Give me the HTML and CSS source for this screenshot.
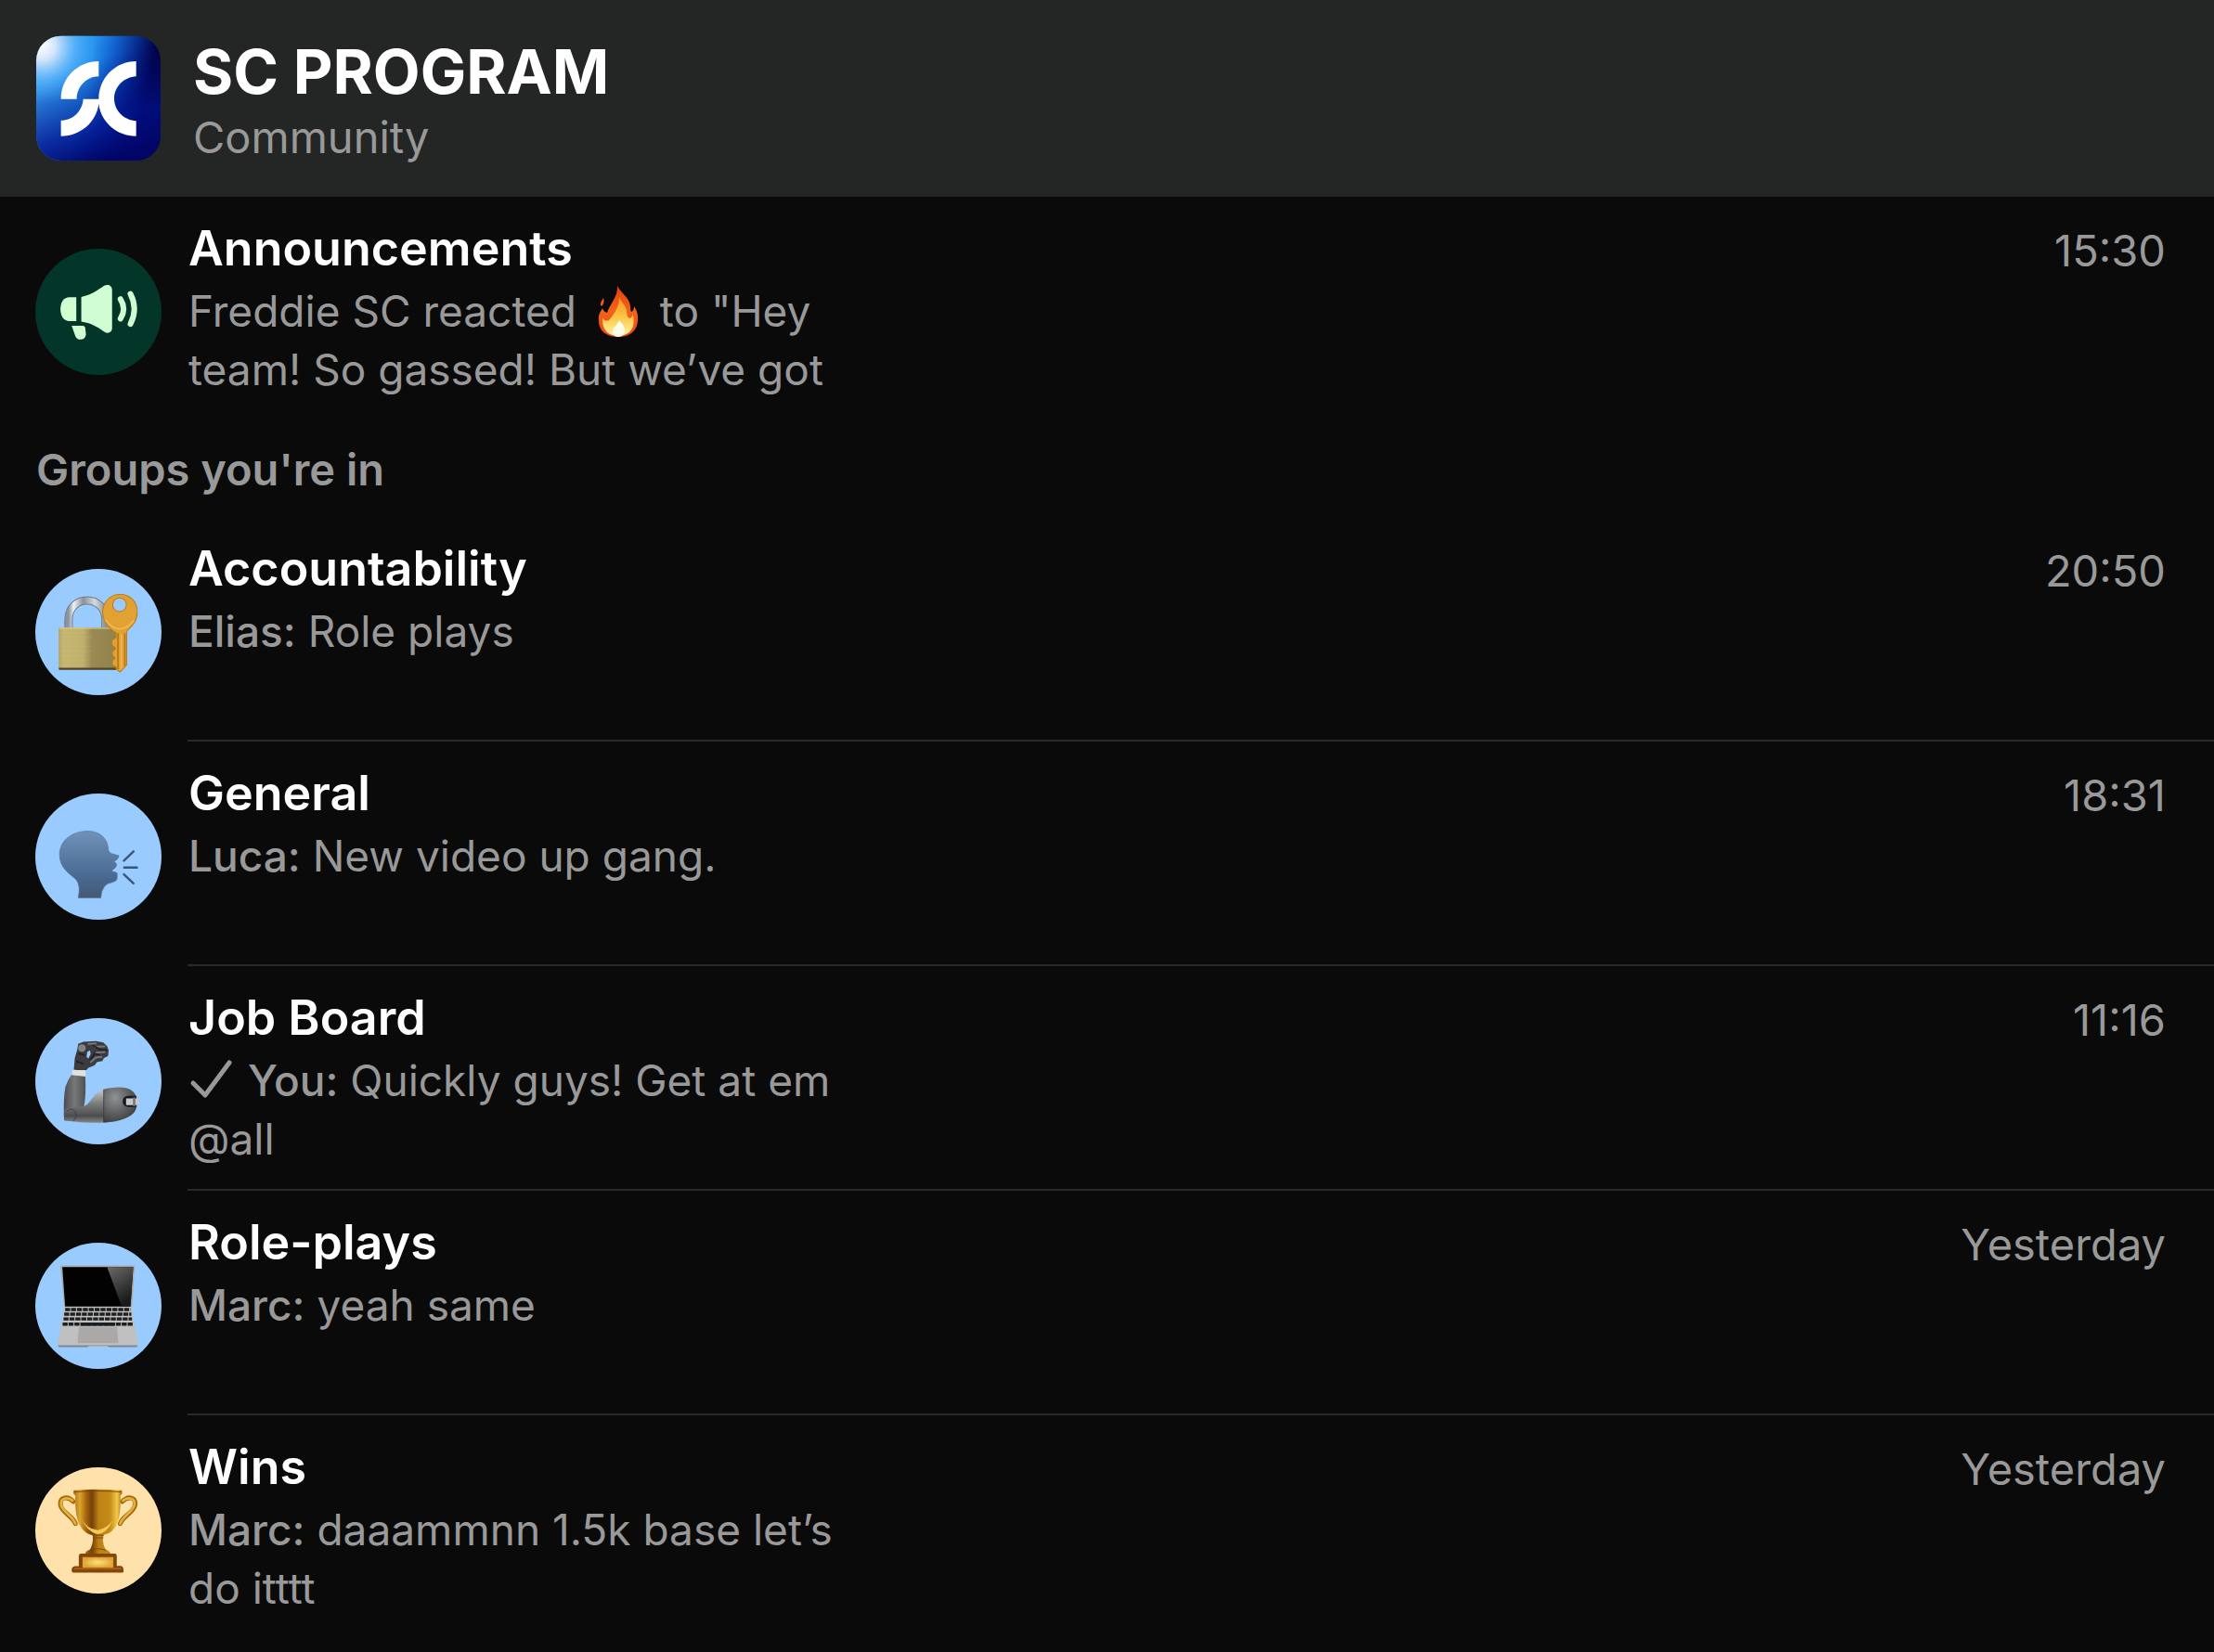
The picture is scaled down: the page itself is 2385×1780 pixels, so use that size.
FILE: index.html
```html
<!DOCTYPE html>
<html lang="en">
<head>
<meta charset="utf-8">
<meta name="viewport" content="width=device-width, initial-scale=1">
<title>SC PROGRAM</title>
<link rel="stylesheet" href="styles.css">
</head>
<body>
<header class="community">
  <svg class="avatar" viewBox="24 24 408 408" aria-hidden="true">
    <defs>
      <linearGradient id="logo-base" x1="0" y1="0.2" x2="1" y2="0.4">
        <stop offset="0" stop-color="#3ba4f5"/><stop offset="0.42" stop-color="#2593ee"/><stop offset="0.58" stop-color="#1263d0"/><stop offset="0.76" stop-color="#062a8c"/><stop offset="0.9" stop-color="#020348"/><stop offset="1" stop-color="#01022c"/>
      </linearGradient>
      <linearGradient id="logo-depth" x1="0.3" y1="0.25" x2="0.55" y2="1">
        <stop offset="0" stop-color="#010a80" stop-opacity="0"/><stop offset="0.65" stop-color="#01108c" stop-opacity="0.8"/><stop offset="1" stop-color="#010568"/>
      </linearGradient>
      <radialGradient id="logo-shine" cx="0.04" cy="0.08" r="0.46">
        <stop offset="0" stop-color="#fff"/><stop offset="0.25" stop-color="#d5e4fb"/><stop offset="0.6" stop-color="#62b8fb" stop-opacity="0.7"/><stop offset="1" stop-color="#3ba4f5" stop-opacity="0"/>
      </radialGradient>
    </defs>
    <g id="logo-tile">
      <rect x="27" y="26" width="402" height="403" rx="80" fill="url(#logo-base)"/>
      <rect x="27" y="26" width="402" height="403" rx="80" fill="url(#logo-depth)"/>
      <rect x="27" y="26" width="402" height="403" rx="80" fill="url(#logo-shine)"/>
    </g>
    <path fill="#fff" d="M229 108V157C190 157 158 190 158 230H107C107 162 161 108 229 108ZM350 108V157C312 159 279 189 279 229S312 299 350 301V350C288 350 236 305 229 245C222 304 170 350 107 350V299C146 299 176 269 179 230H229C229 162 283 108 350 108Z"/>
  </svg>
  <div class="community-text">
    <h1 class="community-name">SC PROGRAM</h1>
    <p class="community-kind">Community</p>
  </div>
</header>

<main>
  <a class="chat" href="#announcements">
    <svg class="avatar" viewBox="55 55 406 406" aria-hidden="true">
      <circle cx="258" cy="258" r="203" fill="#033629"/>
      <g fill="#d0fed2">
        <path d="M187 211V288H165C147 288 136 272 136 249S147 211 165 211Z"/>
        <path d="M203 210C232 206 254 189 277 174C288 167 302 173 302 187V311C302 324 288 330 277 322C254 305 232 293 203 289Z"/>
        <path d="M172 303H207C213 303 216 307 216 312L218 331C216 343 208 347 200 347C191 347 187 342 184 336Z"/>
      </g>
      <g fill="none" stroke="#d0fed2" stroke-width="18" stroke-linecap="round">
        <path d="M329 217Q349 248 329 280M361 200Q386 248 361 297"/>
      </g>
    </svg>
    <div class="chat-text">
      <h2 class="chat-name">Announcements</h2>
      <p class="chat-message">Freddie SC reacted <svg class="fire" viewBox="0 0 44 56" role="img" aria-label="fire"><defs><linearGradient id="flame" x1="0" y1="0" x2="0" y2="1"><stop offset="0" stop-color="#e8400f"/><stop offset="0.5" stop-color="#f36318"/><stop offset="1" stop-color="#ef431b"/></linearGradient><linearGradient id="flame-core" x1="0" y1="0" x2="0" y2="1"><stop offset="0" stop-color="#f79225"/><stop offset="0.45" stop-color="#f9c13d"/><stop offset="0.8" stop-color="#fde27a"/><stop offset="1" stop-color="#fff3b0"/></linearGradient></defs><path fill="url(#flame)" d="M21 0C24 7 34 12 35 22Q35 26 36 28Q39 27 39 22Q44 29 43 38C42 49 34 55 22 55S1 49 1 38C0 31 3 28 5 24Q6 28 10 29C12 21 22 12 21 0ZM6 13Q8 18 4 22Q1 20 6 13Z"/><path fill="url(#flame-core)" d="M23 12C25 18 31 21 31 28Q31 33 34 35Q37 34 38 31Q42 52 23 54Q4 54 5 34Q7 39 12 37C15 33 24 23 23 12Z"/><path fill="#fffbe6" d="M23 37C27 41 30 45 29 50Q27 55 22 55T16 50C15 45 21 43 23 37Z"/></svg> to "Hey team! So gassed! But we’ve got</p>
    </div>
    <time class="chat-time">15:30</time>
  </a>

  <section class="groups">
    <h2 class="groups-title">Groups you're in</h2>
    <ul class="group-list">
      <li>
        <a class="chat" href="#accountability">
          <svg class="avatar" viewBox="55 51 406 406" aria-hidden="true">
            <defs>
              <linearGradient id="brass" x1="0" x2="1"><stop offset="0" stop-color="#b5a463"/><stop offset="0.08" stop-color="#c5b672"/><stop offset="0.4" stop-color="#c0b06c"/><stop offset="0.55" stop-color="#988a52"/><stop offset="1" stop-color="#91814a"/></linearGradient>
              <linearGradient id="shackle" x1="0" x2="1"><stop offset="0" stop-color="#8b94a0"/><stop offset="0.14" stop-color="#eef1f5"/><stop offset="0.4" stop-color="#8b929a"/><stop offset="0.7" stop-color="#d4dae2"/><stop offset="1" stop-color="#8c939c"/></linearGradient>
            </defs>
            <circle cx="258" cy="254" r="203" fill="#99cbff"/>
            <path fill="none" stroke="#727c88" stroke-width="27" d="M162 243V215C162 132 281 132 281 215V243"/>
            <path fill="none" stroke="url(#shackle)" stroke-width="21" d="M162 243V215C162 132 281 132 281 215V243"/>
            <rect x="130" y="240" width="196" height="135" rx="4" fill="url(#brass)"/>
            <path stroke="#ddd08e" stroke-width="3" d="M132 242H312"/>
            <path stroke="#d5c98b" stroke-width="1" opacity="0.6" d="M132 256H220M132 271H240M132 286H215M132 301H230M132 316H240M132 331H210M132 346H230M132 360H220"/>
            <path fill="#51452b" d="M131 369H316V376H131Z"/>
            <path fill="#e2a233" stroke="#ba7e1c" stroke-width="3" fill-rule="evenodd" d="M328 133C363 133 383 160 383 189C383 218 369 233 354 246Q349 251 349 258V360L328 383L315 374V366L303 360V347L312 338L303 328V317L314 307L302 296V281L315 271V257C291 242 272 222 272 190C272 158 295 133 328 133ZM326 144A22 22 0 1 0 326 188A22 22 0 1 0 326 144Z"/>
            <path fill="none" stroke="#b67818" stroke-width="5" d="M321 258V374M343 258V363"/>
            <path fill="none" stroke="#f1bd58" stroke-width="4" d="M332 260V373M280 213Q300 243 328 244Q352 242 373 216"/>
          </svg>
          <div class="chat-text">
            <h3 class="chat-name">Accountability</h3>
            <p class="chat-message"><span class="sender">Elias:</span> Role plays</p>
          </div>
          <time class="chat-time">20:50</time>
        </a>
      </li>
      <li>
        <a class="chat" href="#general">
          <svg class="avatar" viewBox="55 43 406 406" aria-hidden="true">
            <defs><linearGradient id="head" x1="0" y1="0" x2="0" y2="1"><stop offset="0" stop-color="#7092b8"/><stop offset="0.65" stop-color="#4a6b94"/><stop offset="1" stop-color="#445974"/></linearGradient></defs>
            <circle cx="258" cy="246" r="203" fill="#99cbff"/>
            <path fill="url(#head)" stroke="#597899" stroke-width="2" d="M225 164C265 164 289 190 290 224Q291 233 300 236L324 243Q322 255 309 262L317 270L314 280L300 292L318 298Q320 310 317 321C306 332 288 328 277 343Q267 356 266 379H193Q202 339 186 320C169 302 133 285 133 239C134 192 175 164 225 164Z"/>
            <path stroke="#365779" stroke-width="7" stroke-linecap="round" d="M340 259L371 229M341 281H382M340 303L371 332"/>
          </svg>
          <div class="chat-text">
            <h3 class="chat-name">General</h3>
            <p class="chat-message"><span class="sender">Luca:</span> New video up gang.</p>
          </div>
          <time class="chat-time">18:31</time>
        </a>
      </li>
      <li>
        <a class="chat" href="#job-board">
          <svg class="avatar" viewBox="55 49 406 406" aria-hidden="true">
            <defs>
              <linearGradient id="forearm" x1="0" x2="1"><stop offset="0" stop-color="#4c4c4e"/><stop offset="0.5" stop-color="#77787a"/><stop offset="1" stop-color="#505153"/></linearGradient>
              <linearGradient id="upper-arm" x1="0" y1="0" x2="0" y2="1"><stop offset="0" stop-color="#c8cacc"/><stop offset="0.45" stop-color="#77787a"/><stop offset="0.8" stop-color="#4c4d4f"/><stop offset="1" stop-color="#85878a"/></linearGradient>
              <radialGradient id="shoulder" cx="0.35" cy="0.3" r="0.8"><stop offset="0" stop-color="#909193"/><stop offset="0.6" stop-color="#5a5b5d"/><stop offset="1" stop-color="#37383a"/></radialGradient>
            </defs>
            <circle cx="258" cy="252" r="203" fill="#99cbff"/>
            <path fill="#3b3c40" d="M179 215L182 178L190 150L193 132L210 125L250 123L274 127L286 139L291 153L289 171L275 178L271 187L254 190L245 201L226 209L216 219Z"/>
            <path fill="#99cbff" d="M222 158L231 153L233 165L226 179L220 174Z"/>
            <circle cx="205" cy="145" r="12" fill="#818387"/>
            <path fill="none" stroke="#75777b" stroke-width="6" stroke-linecap="round" d="M226 132L250 130M248 141L277 140M252 160L278 158M234 190L250 176L268 174"/>
            <path fill="none" stroke="#1f2023" stroke-width="5" d="M194 163L215 168M187 188L212 197M240 136L265 151L286 152M231 184L245 164L262 167"/>
            <path fill="#dfe1e3" d="M175 216H217V236H172Z"/>
            <path fill="url(#forearm)" d="M171 232L216 237Q219 300 211 336L184 378H148Q144 310 152 270Q160 247 171 232Z"/>
            <path fill="url(#upper-arm)" d="M150 344Q160 335 180 335L208 333C234 330 241 285 278 277V385Q220 387 181 382L151 379Q143 362 150 344Z"/>
            <path fill="url(#shoulder)" d="M275 278C306 270 344 267 364 281Q378 291 380 305V331C382 366 324 383 275 385Z"/>
            <path fill="none" stroke="#303134" stroke-width="2" d="M275 278V385M157 349Q173 333 183 350T176 380"/>
            <path fill="#18191b" d="M380 299H354Q336 300 336 317T354 335H381Z"/>
            <path fill="#c7c9ca" d="M347 307H378Q390 309 390 318T378 329H347Z"/>
            <path fill="#77797b" d="M369 304H377V332H369Z"/>
          </svg>
          <div class="chat-text">
            <h3 class="chat-name">Job Board</h3>
            <p class="chat-message"><svg class="tick" viewBox="0 0 48 44" role="img" aria-label="Sent"><path d="M5 26L18 39L44 4" fill="none" stroke="currentColor" stroke-width="5" stroke-linecap="round" stroke-linejoin="round"/></svg> <span class="sender">You:</span> Quickly guys! Get at em @all</p>
          </div>
          <time class="chat-time">11:16</time>
        </a>
      </li>
      <li>
        <a class="chat" href="#role-plays">
          <svg class="avatar" viewBox="55 57 406 406" aria-hidden="true">
            <defs><linearGradient id="glare" x1="0" y1="0" x2="0.4" y2="1"><stop offset="0" stop-color="#6a6a6a"/><stop offset="1" stop-color="#1a1a1a"/></linearGradient></defs>
            <circle cx="258" cy="260" r="203" fill="#99cbff"/>
            <path fill="#a9a8a5" d="M136 130H375L366 264H148Z"/>
            <path fill="#020202" d="M142 135H370L361 262H151Z"/>
            <path fill="url(#glare)" d="M286 135H370L361 262H333Z"/>
            <path fill="#bfc0bf" d="M148 263H364L385 382V391H127V382Z"/>
            <path stroke="#1d1e20" stroke-width="10" stroke-dasharray="16 3" d="M151 272H361M148 287H364M146 302H366M143 319H369"/>
            <path stroke="#1d1e20" stroke-width="10" d="M201 319H311"/>
            <path fill="#aaa9a8" d="M195 328H318L322 380H191Z"/>
            <path fill="#7c8896" d="M127 387H386L380 393H292L286 389H229L222 393H132Z"/>
          </svg>
          <div class="chat-text">
            <h3 class="chat-name">Role-plays</h3>
            <p class="chat-message"><span class="sender">Marc:</span> yeah same</p>
          </div>
          <time class="chat-time">Yesterday</time>
        </a>
      </li>
      <li>
        <a class="chat" href="#wins">
          <svg class="avatar" viewBox="55 48 406 406" aria-hidden="true">
            <defs>
              <linearGradient id="gold" x1="0" x2="1"><stop offset="0" stop-color="#a86d10"/><stop offset="0.13" stop-color="#dda62c"/><stop offset="0.25" stop-color="#a9690f"/><stop offset="0.38" stop-color="#74400a"/><stop offset="0.52" stop-color="#bd8114"/><stop offset="0.75" stop-color="#c58b18"/><stop offset="0.9" stop-color="#f4ca48"/><stop offset="1" stop-color="#a26a10"/></linearGradient>
              <radialGradient id="plate"><stop offset="0" stop-color="#ffe27a"/><stop offset="1" stop-color="#dfa534"/></radialGradient>
            </defs>
            <circle cx="258" cy="251" r="203" fill="#ffe2ab"/>
            <g fill="none" stroke-linecap="round">
              <path stroke="#a2680e" stroke-width="15" d="M177 158C158 138 133 145 136 169C139 193 174 203 184 229M335 158C354 138 379 145 376 169C373 193 338 203 328 229"/>
              <path stroke="#e5b23c" stroke-width="8" d="M175 155C157 141 135 148 138 169C142 190 174 203 184 229M337 155C355 141 377 148 374 169C370 190 338 203 328 229"/>
            </g>
            <path fill="url(#gold)" d="M178 122Q256 116 334 122V133L329 139C330 204 323 257 275 265L272 278Q273 300 282 313Q298 318 297 330H215Q214 318 230 313Q242 298 240 267C193 256 182 206 184 139L178 133Z"/>
            <path fill="none" stroke="#7e480b" stroke-width="3" d="M180 127Q256 121 332 127M239 267H275M240 275H274M230 315Q256 305 283 315"/>
            <path fill="#f4ca56" d="M203 211Q220 248 256 250Q285 246 303 220Q285 262 254 263Q220 255 203 211Z"/>
            <path fill="#85460a" d="M200 326H313Q317 328 317 333V365H332Q340 369 339 384Q338 387 333 387H178Q171 386 172 377Q173 368 182 366H195V333Q196 327 200 326Z"/>
            <path fill="url(#plate)" d="M207 337H306V371H207Z"/>
            <path stroke="#b36e1b" stroke-width="4" d="M180 374H332"/>
          </svg>
          <div class="chat-text">
            <h3 class="chat-name">Wins</h3>
            <p class="chat-message"><span class="sender">Marc:</span> daaammnn 1.5k base let’s do itttt</p>
          </div>
          <time class="chat-time">Yesterday</time>
        </a>
      </li>
    </ul>
  </section>
</main>
</body>
</html>
```
FILE: styles.css
```css
* {
  box-sizing: border-box;
}

body {
  margin: 0;
  min-height: 100vh;
  background: #0a0a0a;
  color: #999;
  font-family: Inter, "Liberation Sans", sans-serif;
  font-size: 47px;
  line-height: 63px;
}

h1, h2, h3, p, ul {
  margin: 0;
  padding: 0;
}

.community {
  display: flex;
  align-items: flex-start;
  gap: 34px;
  padding: 38px 38px 32px;
  background: #242625;
}

.avatar {
  display: block;
  flex: none;
  width: 136px;
  height: 136px;
}

.community-name {
  color: #fff;
  font-size: 66px;
  font-weight: 700;
  line-height: 78px;
}

.community-kind {
  line-height: 64px;
}

.chat {
  display: flex;
  align-items: stretch;
  gap: 29px;
  padding-left: 38px;
  color: inherit;
  text-decoration: none;
}

.chat .avatar {
  margin-top: 56px;
}

.chat-text {
  flex: 1;
  min-width: 0;
  min-height: 242px;
  padding-top: 24px;
}

.chat-name {
  color: #fff;
  font-size: 52px;
  font-weight: 600;
  line-height: 64px;
}

.chat-message {
  max-width: 720px;
  margin-top: 4px;
  font-size: 46px;
}

.sender {
  font-weight: 500;
}

.chat-time {
  padding: 26px 52px 0 0;
}

.groups-title {
  padding: 20px 39px;
  font-size: 47px;
  font-weight: 600;
}

.group-list {
  list-style: none;
}

.group-list li:not(:last-child) {
  background: linear-gradient(#2a2a2a, #2a2a2a) 202px 100% / 100% 2px no-repeat;
}

.fire {
  width: 46px;
  height: 56px;
  margin: 0 9px;
  vertical-align: -12px;
}

.tick {
  width: 48px;
  height: 44px;
  margin-right: 3px;
  vertical-align: -4px;
}
```
